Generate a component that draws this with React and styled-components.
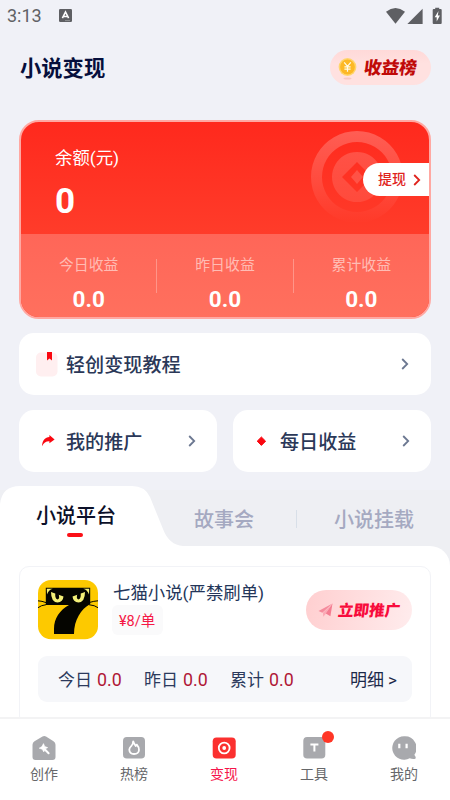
import React from "react";
import styled, { createGlobalStyle, css } from "styled-components";

const GlobalStyle = createGlobalStyle`
  * { box-sizing: border-box; }
  body {
    margin: 0;
    background: #f0f1f7;
    font-family: Roboto, "Noto Sans CJK SC", sans-serif;
    color: #1f2d50;
    overflow: hidden;
  }
  svg { display: block; flex: none; }
`;

const Screen = styled.div`
  width: 450px;
  height: 800px;
  display: flex;
  flex-direction: column;
  overflow: hidden;
  background: #f0f1f7;
`;

const StatusBar = styled.div`
  height: 30px;
  flex: none;
  display: flex;
  align-items: center;
  padding: 1px 7px 0 7px;
  color: #606165;
`;

const Clock = styled.span`
  width: 52px;
  font-size: 18px;
  line-height: 28px;
`;

const StatusIcons = styled.div`
  margin-left: auto;
  display: flex;
  align-items: center;
`;

const Header = styled.header`
  height: 90px;
  flex: none;
  display: flex;
  align-items: flex-start;
  justify-content: space-between;
  padding: 20px 19px 0 20px;
`;

const Title = styled.h1`
  margin: 1px 0 0;
  font-size: 21.3px;
  font-weight: 700;
  line-height: 36px;
  color: #060f3c;
`;

const RankPill = styled.button`
  width: 101px;
  height: 35px;
  border: 0;
  border-radius: 18px;
  background: linear-gradient(#ffd9d8, #ffe1e0 40%);
  display: flex;
  align-items: center;
  padding: 0 0 0 8px;
  font: 900 17.6px/35px Roboto, "Noto Sans CJK SC", sans-serif;
  color: #c00a08;
  gap: 7px;
`;

const Slanted = styled.span`
  display: block;
  margin-top: ${(p) => p.$drop || 0}px;
  transform: skewX(-7deg);
  white-space: nowrap;
`;

const BalanceCard = styled.section`
  position: relative;
  height: 199px;
  flex: none;
  margin: 0 19px 0 19px;
  border: 2.5px solid #ffa8a2;
  border-radius: 20px;
  overflow: hidden;
  background: linear-gradient(#ff291d, #ff3c2a 112px);
`;

const Coin = styled.svg`
  position: absolute;
  left: 289px;
  top: 8px;
`;

const BalanceTop = styled.div`
  position: relative;
  height: 112px;
  display: flex;
  justify-content: space-between;
  padding: 23px 0 0 34px;
  color: #fff;
`;

const BalanceLabel = styled.div`
  font-size: 17.4px;
  line-height: 27px;
`;

const BalanceValue = styled.div`
  font-size: 35px;
  font-weight: 700;
  line-height: 42px;
  margin-top: 9px;
`;

const WithdrawButton = styled.button`
  width: 66px;
  height: 33px;
  margin-top: 18px;
  border: 0;
  border-radius: 17px 0 0 17px;
  background: #fff;
  display: flex;
  align-items: center;
  gap: 5px;
  padding: 0 0 0 15px;
  font: 500 14px/33px Roboto, "Noto Sans CJK SC", sans-serif;
  color: #e0241e;
`;

const Earnings = styled.div`
  position: relative;
  height: 84px;
  display: flex;
  align-items: center;
  background: linear-gradient(#ff6658, #ff705e);
`;

const Earning = styled.div`
  flex: 1;
  height: 84px;
  padding-top: 19px;
  text-align: center;
`;

const EarningLabel = styled.div`
  font-size: 14.9px;
  line-height: 24px;
  color: #ffbcb4;
`;

const EarningValue = styled.div`
  font-size: 22.5px;
  font-weight: 700;
  line-height: 28px;
  margin-top: 8px;
  color: #fff;
`;

const Rule = styled.div`
  width: 1px;
  height: ${(p) => p.$height}px;
  background: ${(p) => p.$color};
  flex: none;
`;

const Shortcuts = styled.div`
  display: grid;
  grid-template-columns: 198px 198px;
  grid-template-rows: 62px 62px;
  gap: 15px 16px;
  margin: 14px 19px 0;
  flex: none;
`;

const Shortcut = styled.button`
  grid-column: ${(p) => (p.$wide ? "1 / -1" : "auto")};
  border: 0;
  border-radius: 15px;
  background: #fff;
  display: flex;
  align-items: center;
  padding: 0 ${(p) => (p.$wide ? 20 : 19.5)}px 0 17px;
  font: 500 19.1px/30px Roboto, "Noto Sans CJK SC", sans-serif;
  color: #2b3858;
  gap: 6px;
`;

const ShortcutText = styled.span`
  flex: 1;
  text-align: left;
  margin: 3px 0 0 1px;
`;

const Tabs = styled.nav`
  height: 60px;
  margin-top: 14px;
  flex: none;
  display: flex;
  align-items: center;
  background: linear-gradient(#f0f1f7 0 4px, #eeeff3 4px);
`;

const tabText = css`
  border: 0;
  padding: 0;
  font: 500 20px/30px Roboto, "Noto Sans CJK SC", sans-serif;
`;

const ActiveTab = styled.button`
  ${tabText}
  width: 183px;
  height: 60px;
  background: #fff;
  color: #0c1029;
  display: flex;
  flex-direction: column;
  align-items: flex-start;
  justify-content: flex-start;
  padding: 15px 0 0 36px;
  clip-path: path("M0 60 V18 Q2 0 20 0 H132 Q145 0 150 11 L163 43 Q169 59 183 60 Z");
`;

const Underline = styled.i`
  width: 16px;
  height: 4px;
  margin: 2px 0 0 31px;
  border-radius: 2px;
  background: #fb1017;
`;

const Tab = styled.button`
  ${tabText}
  background: transparent;
  color: #a5a9c1;
  margin: 8px 0 0 ${(p) => p.$gap}px;
`;

const DividerSlot = styled.span`
  margin: 5px 0 0 42px;
`;

const PanelBack = styled.main`
  flex: 1;
  min-height: 0;
  overflow: hidden;
  display: flex;
  background: #eeeff3;
`;

const Panel = styled.div`
  flex: 1;
  padding: 20px 19px 0;
  background: #fff;
  border-radius: 0 20px 0 0;
`;

const BookCard = styled.article`
  height: 160px;
  padding: 13px 18px;
  border: 1px solid #f2f3f7;
  border-radius: 10px;
`;

const BookHead = styled.div`
  display: flex;
  height: 60px;
`;

const BookInfo = styled.div`
  flex: 1;
  padding-left: 15px;
  display: flex;
  flex-direction: column;
  align-items: flex-start;
`;

const BookName = styled.div`
  font-size: 17.4px;
  line-height: 26px;
  white-space: nowrap;
  color: #24365a;
`;

const Price = styled.span`
  height: 30px;
  margin: -1px 0 0 -1px;
  padding: 0 8px 0 7px;
  border-radius: 6px;
  background: #fafafb;
  font-size: 14.5px;
  line-height: 33px;
  color: #f51846;
`;

const PromoteButton = styled.button`
  width: 106px;
  height: 40px;
  margin-top: 10px;
  border: 0;
  border-radius: 20px;
  background: linear-gradient(100deg, #ffcfd0, #ffeced);
  display: flex;
  align-items: center;
  gap: 5px;
  padding: 0 0 0 12px;
  font: 900 15.5px/40px Roboto, "Noto Sans CJK SC", sans-serif;
  color: #f80b3c;
`;

const BookStats = styled.div`
  height: 46px;
  margin-top: 16px;
  padding: 2px 15px 0 20px;
  border-radius: 9px;
  background: #f6f7fa;
  display: flex;
  align-items: center;
  font-size: 17px;
  line-height: 44px;
  color: #2c3a5c;
`;

const BookStat = styled.span`
  width: 86px;
  white-space: pre;
`;

const Amount = styled.span`
  margin-left: 5px;
  color: #b01736;
  font-size: 17.8px;
`;

const Details = styled.span`
  margin-left: auto;
  color: #1c2949;
`;

const BottomNav = styled.nav`
  height: 83px;
  flex: none;
  display: grid;
  grid-template-columns: repeat(5, 90px);
  border-top: 2px solid #f3f3f4;
  background: #fff;
`;

const NavItem = styled.button`
  position: relative;
  border: 0;
  background: none;
  padding: 16px 2px 0 0;
  display: flex;
  flex-direction: column;
  align-items: center;
  font: 400 14px/22px Roboto, "Noto Sans CJK SC", sans-serif;
  color: ${(p) => (p.$active ? "#f5144a" : "#66676a")};
`;

const NavLabel = styled.span`
  margin-top: 2px;
`;

const Dot = styled.i`
  position: absolute;
  left: 51.5px;
  top: 12px;
  width: 12px;
  height: 12px;
  border-radius: 50%;
  background: #ff3626;
`;

const Chevron = ({ color = "#6c7891", size = 12, weight = 1.8 }) => (
  <svg width={size} height={size} viewBox="0 0 12 12" fill="none" stroke={color} strokeWidth={weight}>
    <path d="M3.2 1 L8.2 6 L3.2 11" />
  </svg>
);

const KeyboardIcon = () => (
  <svg width="13" height="13" viewBox="0 0 13 13">
    <rect width="13" height="13" rx="1.3" fill="#5e5f63" />
    <path d="M3.4 9.2 L6.5 3 L9.6 9.2 M4.6 7.5 H8.4" fill="none" stroke="#fff" strokeWidth="1.6" />
    <path d="M6 11.6h5" stroke="#b0b1b4" strokeWidth=".6" />
  </svg>
);

const SignalIcons = () => (
  <svg width="57" height="18" viewBox="0 0 57 18" fill="#5e5f63">
    <path d="M0 4.7 Q9.5 -2.5 19 4.7 L9.5 16.7 Z" />
    <path d="M36.6 1.7 V17 H21.4 Z" />
    <path d="M49.2 2 V.7 h4 v1.3 h1.5 q1 0 1 1 v13 q0 1-1 1 h-7 q-1 0-1-1 v-13 q0-1 1-1z" />
    <path d="M52.5 4 L48.7 10.2 h2 v4.3 L53.9 8.6 h-2.1z" fill="#fff" />
  </svg>
);

const CoinBadge = () => (
  <svg width="19" height="24" viewBox="0 0 19 24">
    <ellipse cx="9.5" cy="22.6" rx="4" ry="1" fill="#f9c9c2" />
    <circle cx="9.5" cy="11" r="8.9" fill="#ffd56b" />
    <circle cx="9.5" cy="11" r="7.4" fill="#fdb825" />
    <path d="M6.2 6.4 L9.5 10.4 L12.8 6.4 M9.5 10.4 V15.8 M6.4 10.9 h6.2 M6.4 13.2 h6.2" fill="none" stroke="#fffbe9" strokeWidth="1.2" />
  </svg>
);

const CoinArt = () => (
  <Coin width="94" height="94" viewBox="0 0 94 94">
    <defs>
      <linearGradient id="coinFade" x1="0" y1="0" x2="0" y2="1">
        <stop offset="0" stopColor="#fff" stopOpacity=".24" />
        <stop offset=".5" stopColor="#fff" stopOpacity=".13" />
        <stop offset="1" stopColor="#fff" stopOpacity="0" />
      </linearGradient>
      <linearGradient id="discFade" x1="0" y1="0" x2="0" y2="1">
        <stop offset="0" stopColor="#fff" stopOpacity=".17" />
        <stop offset="1" stopColor="#fff" stopOpacity=".1" />
      </linearGradient>
    </defs>
    <path fill="url(#coinFade)" fillRule="evenodd" d="M47 1a46 46 0 1 0 .01 0zM47 12a35 35 0 1 1-.01 0z" />
    <path fill="url(#discFade)" fillRule="evenodd" d="M47 22a25 25 0 1 0 .01 0zM47 32l15 15-15 15-15-15z" />
    <path fill="#fff" opacity=".16" d="M47 40l6 7-6 7-6-7z" />
  </Coin>
);

const TutorialIcon = () => (
  <svg width="23" height="26" viewBox="0 0 23 26">
    <rect x="0" y="1.5" width="21.5" height="24" rx="5" fill="#ffeff0" />
    <path d="M11 1 h5 v8.5 l-2.5-2 -2.5 2z" fill="#fa0710" />
  </svg>
);

const ShareIcon = () => (
  <svg width="23" height="24" viewBox="0 0 23 24">
    <path d="M6.1 17.2 C6.2 11.6 9.2 8.4 13.4 8.1 V6 L18.6 10.4 L13.4 14.2 V12.3 C10 12.2 7.7 13.6 6.1 17.2Z" fill="#fa0710" />
  </svg>
);

const DiamondIcon = () => (
  <svg width="23" height="24" viewBox="0 0 23 24">
    <path d="M11.4 8 L15.6 12.2 L11.4 16.4 L7.2 12.2Z" fill="#fa0710" stroke="#fa0710" strokeLinejoin="round" />
  </svg>
);

const CatLogo = () => (
  <svg width="60" height="60" viewBox="0 0 60 60">
    <rect width="60" height="59.3" rx="13" fill="#fdc900" />
    <path d="M7.8 7.8 H52.2 V24 C43 29 36 40 36 54 H16 V49 C16 38 22 30 31 25 H7.8Z" fill="#050500" />
    <path d="M8.8 8.7 L14.7 8.7 Q10.5 10 9 14.5Z M51.2 8.7 L45.3 8.7 Q49.5 10 51 14.5Z" fill="#f4f078" />
    <path d="M13 12 L25.5 16.5 Q25 22 19.5 22.5 Q13 22 13 12Z M47 12 L34.5 16.5 Q35 22 40.5 22.5 Q47 22 47 12Z" fill="#f4f078" />
    <path d="M17.6 11.5 Q16.3 19 19.6 19.5 Q22.4 18.5 20.3 13Z M42.4 11.5 Q43.7 19 40.4 19.5 Q37.6 18.5 39.7 13Z" fill="#050500" />
    <path d="M0 20.8 Q4 21 8 22.6 M0 27.7 Q3 25.3 8 24.7 M60 20.8 Q56 21 51 22.6 M60 27.7 Q57 25.3 51 24.7" fill="none" stroke="#050500" strokeWidth="1" />
  </svg>
);

const PlaneIcon = () => (
  <svg width="15" height="15" viewBox="0 0 15 15">
    <path d="M14.5 .5 L.5 8 L4.4 9.7Z" fill="#f58b9c" />
    <path d="M14.5 .5 L7.4 10.2 L12.4 13.2Z" fill="#f47d91" />
    <path d="M14.5 .5 L7.4 11.2 L5.2 13.8 L5 9.8Z" fill="#fba9b5" />
  </svg>
);

const CreateIcon = () => (
  <svg width="24" height="26" viewBox="0 0 24 26">
    <path d="M10.5 1.6 Q12.2 .4 14 1.6 L21.5 6.3 Q23.5 7.5 23.5 9.7 V22 Q23.5 25 20.5 25 H3.5 Q.5 25 .5 22 V9.7 Q.5 7.5 2.5 6.3Z" fill="#a8a9ad" />
    <path d="M11.5 8.6 l1.2 2.9 3 1.1 -2.6 1.5 -1.3 2.8 -1.6-2.7 -3-1 2.7-1.6z" fill="#fff" stroke="#fff" strokeWidth=".6" strokeLinejoin="round" />
    <path d="M12.7 14.3 L16.6 18.3" stroke="#fff" strokeWidth="2" strokeLinecap="round" />
  </svg>
);

const HotIcon = () => (
  <svg width="24" height="26" viewBox="0 0 24 26">
    <rect x="1" y="2" width="22" height="21.5" rx="3.8" fill="#a8a9ad" />
    <path d="M11.2 6.3 Q12 9.3 13.8 11 L14.8 9.6 Q17 12 17 15 Q16.7 19 12 19 Q7.5 18.8 7.3 14.7 Q7.5 12.7 9.2 11.2 Q11.2 9.2 11.2 6.3Z" fill="none" stroke="#fff" strokeWidth="1.8" strokeLinejoin="round" />
  </svg>
);

const EarnIcon = () => (
  <svg width="24" height="26" viewBox="0 0 24 26">
    <rect x=".7" y="2.5" width="23" height="21" rx="3.8" fill="#fb302f" />
    <circle cx="12.2" cy="13" r="5.4" fill="none" stroke="#fff" strokeWidth="1.8" />
    <circle cx="12.2" cy="13" r="1.9" fill="#fff" />
  </svg>
);

const ToolIcon = () => (
  <svg width="24" height="26" viewBox="0 0 24 26">
    <rect x="1.3" y="2" width="22" height="21.5" rx="3.8" fill="#a8a9ad" />
    <path d="M8.4 9.6 H16.4 M12.4 9.6 V16.5" fill="none" stroke="#fff" strokeWidth="2" />
  </svg>
);

const ProfileIcon = () => (
  <svg width="24" height="26" viewBox="0 0 24 26">
    <path d="M12 1.3 a11.7 11.7 0 1 0 5.7 21.9 q2.7 1.2 5.7 .6 q.6-1.2 0-2.4 q-1-.8-.9-1.8 A11.7 11.7 0 0 0 12 1.3Z" fill="#a8a9ad" />
    <path d="M7.3 8.7 v4.5 M14.6 8.7 v4.5" stroke="#fff" strokeWidth="2.2" />
  </svg>
);

const earnings = [
  ["今日收益", "0.0"],
  ["昨日收益", "0.0"],
  ["累计收益", "0.0"],
];

const bookStats = [
  ["今日", "0.0"],
  ["昨日", "0.0"],
  ["累计", "0.0"],
];

const navItems = [
  { label: "创作", Icon: CreateIcon },
  { label: "热榜", Icon: HotIcon },
  { label: "变现", Icon: EarnIcon, active: true },
  { label: "工具", Icon: ToolIcon, dot: true },
  { label: "我的", Icon: ProfileIcon },
];

export default function App() {
  return (
    <Screen>
      <GlobalStyle />
      <StatusBar>
        <Clock>3:13</Clock>
        <KeyboardIcon />
        <StatusIcons>
          <SignalIcons />
        </StatusIcons>
      </StatusBar>
      <Header>
        <Title>小说变现</Title>
        <RankPill>
          <CoinBadge />
          <Slanted $drop={2}>收益榜</Slanted>
        </RankPill>
      </Header>
      <BalanceCard>
        <CoinArt />
        <BalanceTop>
          <div>
            <BalanceLabel>余额(元)</BalanceLabel>
            <BalanceValue>0</BalanceValue>
          </div>
          <WithdrawButton>
            提现
            <Chevron color="#e0241e" />
          </WithdrawButton>
        </BalanceTop>
        <Earnings>
          {earnings.map(([label, value], i) => (
            <React.Fragment key={label}>
              {i > 0 && <Rule $height={34} $color="#ff9589" />}
              <Earning>
                <EarningLabel>{label}</EarningLabel>
                <EarningValue>{value}</EarningValue>
              </Earning>
            </React.Fragment>
          ))}
        </Earnings>
      </BalanceCard>
      <Shortcuts>
        <Shortcut $wide>
          <TutorialIcon />
          <ShortcutText>轻创变现教程</ShortcutText>
          <Chevron />
        </Shortcut>
        <Shortcut>
          <ShareIcon />
          <ShortcutText>我的推广</ShortcutText>
          <Chevron />
        </Shortcut>
        <Shortcut>
          <DiamondIcon />
          <ShortcutText>每日收益</ShortcutText>
          <Chevron />
        </Shortcut>
      </Shortcuts>
      <Tabs>
        <ActiveTab>
          小说平台
          <Underline />
        </ActiveTab>
        <Tab $gap={11}>故事会</Tab>
        <DividerSlot>
          <Rule $height={18} $color="#d8dfe8" />
        </DividerSlot>
        <Tab $gap={37}>小说挂载</Tab>
      </Tabs>
      <PanelBack>
        <Panel>
          <BookCard>
            <BookHead>
              <CatLogo />
              <BookInfo>
                <BookName>七猫小说(严禁刷单)</BookName>
                <Price>¥8/单</Price>
              </BookInfo>
              <PromoteButton>
                <PlaneIcon />
                <Slanted $drop={1}>立即推广</Slanted>
              </PromoteButton>
            </BookHead>
            <BookStats>
              {bookStats.map(([label, value]) => (
                <BookStat key={label}>
                  {label}
                  <Amount>{value}</Amount>
                </BookStat>
              ))}
              <Details>明细 &gt;</Details>
            </BookStats>
          </BookCard>
        </Panel>
      </PanelBack>
      <BottomNav>
        {navItems.map(({ label, Icon, active, dot }) => (
          <NavItem key={label} $active={active}>
            <Icon />
            {dot && <Dot />}
            <NavLabel>{label}</NavLabel>
          </NavItem>
        ))}
      </BottomNav>
    </Screen>
  );
}
